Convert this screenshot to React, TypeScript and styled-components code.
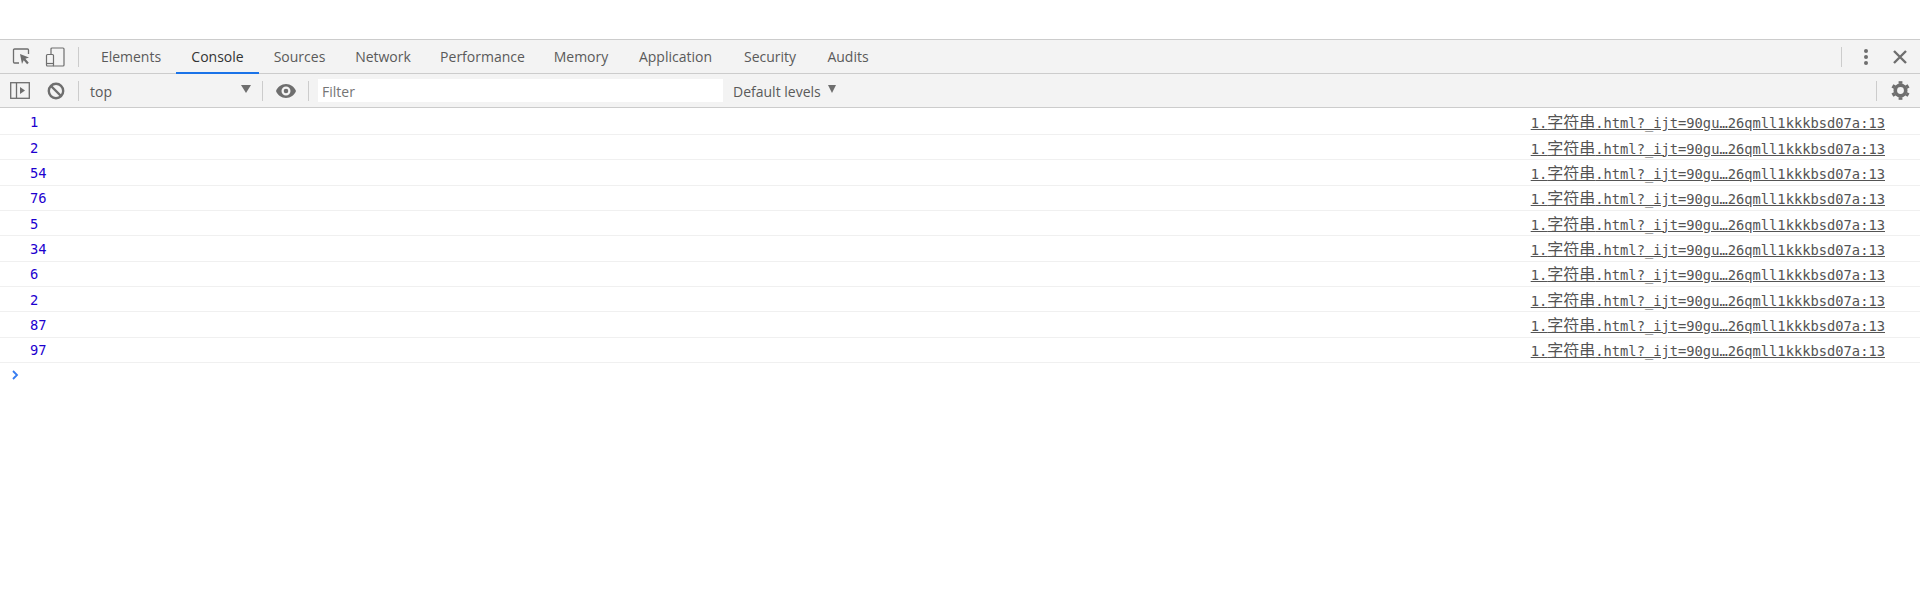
import React from "react";
import styled, { createGlobalStyle } from "styled-components";

const Global = createGlobalStyle`
  html, body { margin: 0; padding: 0; background: #fff; }
  body { font-family: "Open Sans", "Noto Sans", sans-serif; overflow: hidden; }
`;

const Page = styled.div`
  width: 1920px;
  height: 613px;
  padding-top: 39px;
  box-sizing: border-box;
  display: flex;
  flex-direction: column;
`;

const Bar = styled.div<{ $h: number }>`
  height: ${(p) => p.$h}px;
  box-sizing: border-box;
  background: #f3f3f3;
  border-bottom: 1px solid #ccc;
  display: flex;
  align-items: stretch;
  flex: none;
`;

const TabBar = styled(Bar)`
  border-top: 1px solid #ccc;
  padding-right: 10px;
`;

const IconSlot = styled.div<{ $w: number; $pl?: number }>`
  width: ${(p) => p.$w}px;
  padding-left: ${(p) => p.$pl ?? 0}px;
  flex: none;
  display: flex;
  align-items: center;
  justify-content: center;
`;

const Divider = styled.div`
  width: 1px;
  height: 20px;
  background: #ccc;
  align-self: center;
  flex: none;
`;

const Tabs = styled.div`
  display: flex;
  margin-left: 7px;
`;

const Tab = styled.div<{ $active?: boolean; $w: number }>`
  width: ${(p) => p.$w}px;
  box-sizing: border-box;
  display: flex;
  align-items: center;
  justify-content: center;
  padding-top: 1px;
  font-size: 14px;
  color: ${(p) => (p.$active ? "#333" : "#5a5a5a")};
  border-bottom: 2px solid ${(p) => (p.$active ? "#1a73e8" : "transparent")};
  margin-bottom: -1px;
`;

const Spacer = styled.div`
  flex: 1;
`;

const ContextSelect = styled.div`
  width: 183px;
  flex: none;
  box-sizing: border-box;
  padding: 1px 11px 0 11px;
  display: flex;
  align-items: center;
  justify-content: space-between;
  font-size: 14px;
  color: #5a5a5a;
`;

const Caret = styled.span`
  width: 0;
  height: 0;
  border-left: 5px solid transparent;
  border-right: 5px solid transparent;
  border-top: 8px solid #6e6e6e;
  margin-top: -4px;
`;

const FilterInput = styled.div`
  width: 405px;
  height: 23px;
  margin: 0 10px 0 9px;
  align-self: center;
  background: #fff;
  font-size: 14px;
  color: #757575;
  display: flex;
  align-items: center;
  padding: 1px 0 0 4px;
  box-sizing: border-box;
  flex: none;
`;

const Levels = styled.div`
  display: flex;
  align-items: center;
  gap: 7px;
  padding-top: 1px;
  font-size: 14px;
  color: #5a5a5a;
`;

const LevelCaret = styled(Caret)`
  border-left-width: 4.5px;
  border-right-width: 4.5px;
`;

const Log = styled.div`
  display: flex;
  flex-direction: column;
  padding-top: 1.5px;
  font-family: "DejaVu Sans Mono", "Noto Sans CJK SC", monospace;
  font-size: 13.75px;
`;

const Row = styled.div`
  height: 25.35px;
  box-sizing: border-box;
  border-bottom: 1px solid #f0f0f0;
  padding: 1px 35px 0 30px;
  display: flex;
  align-items: center;
  justify-content: space-between;
`;

const Num = styled.span`
  color: #1c00cf;
`;

const Source = styled.a`
  color: #545454;
  text-decoration: underline;
  white-space: nowrap;
`;

const Cjk = styled.span`
  font-family: "Noto Sans CJK SC", sans-serif;
  font-size: 16px;
  line-height: 1;
`;

const Prompt = styled.div`
  height: 24px;
  padding-left: 12px;
  display: flex;
  align-items: center;
`;

const values = [1, 2, 54, 76, 5, 34, 6, 2, 87, 97];
const tabs: [string, number][] = [
  ["Elements", 90],
  ["Console", 83],
  ["Sources", 81],
  ["Network", 86],
  ["Performance", 113],
  ["Memory", 84],
  ["Application", 105],
  ["Security", 84],
  ["Audits", 72],
];

const G = "#6e6e6e";

const Inspect = () => (
  <svg width="20" height="20" viewBox="0 0 20 20" fill="none">
    <path d="M7 16H2.500a1 1 0 0 1-1-1V3a1 1 0 0 1 1-1h13a1 1 0 0 1 1 1v4" stroke={G} strokeWidth="1.3" />
    <path d="M8 7l9 3.500-3.600 1.300 3.400 3.900-1.700 1.500-3.400-3.900L10 17z" fill={G} />
  </svg>
);

const Device = () => (
  <svg width="20" height="20" viewBox="0 0 20 20" fill="none" stroke={G} strokeWidth="1.2">
    <path d="M6 7V2a1 1 0 0 1 1-1h11a1 1 0 0 1 1 1v16a1 1 0 0 1-1 1H8" />
    <rect x="1.500" y="7.500" width="7" height="11.500" rx="1" />
    <path d="M1.500 16.500h7" />
  </svg>
);

const Sidebar = () => (
  <svg width="20" height="17" viewBox="0 0 20 17" fill="none">
    <rect x="0.7" y="0.7" width="18.600" height="15.600" stroke={G} strokeWidth="1.3" />
    <path d="M6.500 1v15" stroke={G} strokeWidth="1.3" />
    <path d="M10 5l5 3.500-5 3.500z" fill={G} />
  </svg>
);

const Block = () => (
  <svg width="18" height="18" viewBox="0 0 18 18" fill="none" stroke={G} strokeWidth="2.4">
    <circle cx="9" cy="9" r="7.200" />
    <path d="M4 4l10 10" />
  </svg>
);

const Eye = () => (
  <svg width="20" height="14" viewBox="0 0 20 14">
    <path
      fillRule="evenodd"
      fill={G}
      d="M10 0c4.600 0 8.500 2.900 10 7-1.500 4.100-5.400 7-10 7S1.500 11.100 0 7C1.500 2.900 5.400 0 10 0zm0 2.500a4.500 4.500 0 1 0 0 9 4.500 4.500 0 0 0 0-9zM10 4.700a2.300 2.300 0 1 1 0 4.600 2.300 2.300 0 0 1 0-4.600z"
    />
  </svg>
);

const Dots = () => (
  <svg width="6" height="18" viewBox="0 0 6 18" fill={G}>
    <circle cx="3" cy="3" r="2" />
    <circle cx="3" cy="9" r="2" />
    <circle cx="3" cy="15" r="2" />
  </svg>
);

const Close = () => (
  <svg width="14" height="14" viewBox="0 0 14 14" stroke={G} strokeWidth="2.4">
    <path d="M1 1l12 12M13 1L1 13" />
  </svg>
);

const Gear = () => (
  <svg width="19" height="19" viewBox="-10 -10 20 20" fill="none" stroke={G}>
    <circle r="5.500" strokeWidth="3.800" />
    {[0, 60, 120, 180, 240, 300].map((a) => (
      <path key={a} d="M0-7V-9.800" strokeWidth="4" transform={`rotate(${a})`} />
    ))}
  </svg>
);

const Chevron = () => (
  <svg width="7" height="10" viewBox="0 0 7 10" fill="none" stroke="#367cf1" strokeWidth="1.8">
    <path d="M1 1l4 4-4 4" />
  </svg>
);

export default function App() {
  return (
    <Page>
      <Global />
      <TabBar $h={35}>
        <IconSlot $w={44}><Inspect /></IconSlot>
        <IconSlot $w={22}><Device /></IconSlot>
        <IconSlot $w={12}><span /></IconSlot>
        <Divider />
        <Tabs>
          {tabs.map(([t, w]) => (
            <Tab key={t} $w={w} $active={t === "Console"}>{t}</Tab>
          ))}
        </Tabs>
        <Spacer />
        <Divider />
        <IconSlot $w={48}><Dots /></IconSlot>
        <IconSlot $w={20}><Close /></IconSlot>
      </TabBar>
      <Bar $h={34}>
        <IconSlot $w={39}><Sidebar /></IconSlot>
        <IconSlot $w={34}><Block /></IconSlot>
        <IconSlot $w={5}><span /></IconSlot>
        <Divider />
        <ContextSelect>top<Caret /></ContextSelect>
        <Divider />
        <IconSlot $w={45}><Eye /></IconSlot>
        <Divider />
        <FilterInput>Filter</FilterInput>
        <Levels>Default levels<LevelCaret /></Levels>
        <Spacer />
        <Divider />
        <IconSlot $w={39} $pl={4}><Gear /></IconSlot>
      </Bar>
      <Log>
        {values.map((v, i) => (
          <Row key={i}>
            <Num>{v}</Num>
            <Source>1.<Cjk>字符串</Cjk>.html?_ijt=90gu…26qmll1kkkbsd07a:13</Source>
          </Row>
        ))}
        <Prompt><Chevron /></Prompt>
      </Log>
    </Page>
  );
}
